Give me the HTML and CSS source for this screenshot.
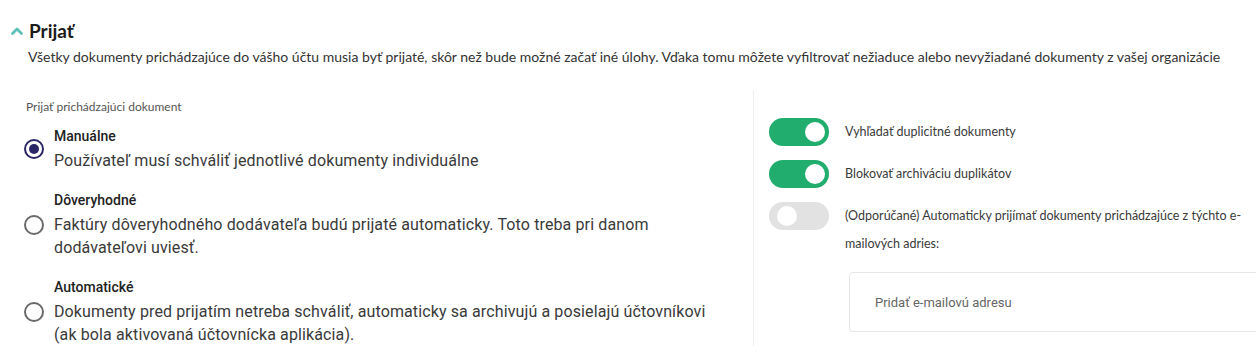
FILE: index.html
```html
<!DOCTYPE html>
<html lang="sk">
<head>
<meta charset="utf-8">
<link rel="stylesheet" href="styles.css">
</head>
<body>
<div class="page">
  <div class="head">
    <svg class="chev" width="12" height="8" viewBox="0 0 12 8"><path d="M1.5 6.5 L6 2 L10.5 6.5" fill="none" stroke="#5cc0b5" stroke-width="2.8" stroke-linecap="round" stroke-linejoin="round"/></svg>
    <h2 class="title">Prijať</h2>
  </div>
  <p class="desc">Všetky dokumenty prichádzajúce do vášho účtu musia byť prijaté, skôr než bude možné začať iné úlohy. Vďaka tomu môžete vyfiltrovať nežiaduce alebo nevyžiadané dokumenty z vašej organizácie</p>
  <div class="cols">
    <div class="left">
      <div class="label">Prijať prichádzajúci dokument</div>
      <div class="radio-item">
        <span class="radio checked"></span>
        <div class="rtext">
          <div class="rtitle">Manuálne</div>
          <div class="rdesc">Používateľ musí schváliť jednotlivé dokumenty individuálne</div>
        </div>
      </div>
      <div class="radio-item">
        <span class="radio"></span>
        <div class="rtext">
          <div class="rtitle">Dôveryhodné</div>
          <div class="rdesc">Faktúry dôveryhodného dodávateľa budú prijaté automaticky. Toto treba pri danom dodávateľovi uviesť.</div>
        </div>
      </div>
      <div class="radio-item">
        <span class="radio"></span>
        <div class="rtext">
          <div class="rtitle">Automatické</div>
          <div class="rdesc">Dokumenty pred prijatím netreba schváliť, automaticky sa archivujú a posielajú účtovníkovi (ak bola aktivovaná účtovnícka aplikácia).</div>
        </div>
      </div>
    </div>
    <div class="right">
      <div class="trow">
        <span class="toggle on"><span class="knob"></span></span>
        <span class="tlabel">Vyhľadať duplicitné dokumenty</span>
      </div>
      <div class="trow">
        <span class="toggle on"><span class="knob"></span></span>
        <span class="tlabel">Blokovať archiváciu duplikátov</span>
      </div>
      <div class="trow">
        <span class="toggle"><span class="knob"></span></span>
        <div class="tcol">
          <span class="tlabel">(Odporúčané) Automaticky prijímať dokumenty prichádzajúce z týchto e-mailových adries:</span>
          <div class="input">Pridať e-mailovú adresu</div>
        </div>
      </div>
    </div>
  </div>
</div>
</body>
</html>
```

FILE: styles.css
```css
html, body {
  margin: 0;
  padding: 0;
  background: #fff;
  overflow: hidden;
}
.page {
  width: 1256px;
  height: 358px;
  overflow: hidden;
  font-family: Lato, "Noto Sans", sans-serif;
}
.head {
  display: flex;
  align-items: center;
  gap: 6px;
  padding: 20px 0 0 11px;
  height: 22px;
}
.chev {
  display: block;
  margin-top: 0;
}
.title {
  margin: 0;
  font-family: Lato, sans-serif;
  font-weight: 700;
  font-size: 19px;
  line-height: 22px;
  color: #1c1c1c;
}
.desc {
  margin: 5px 0 0 28px;
  font-size: 14px;
  line-height: 20px;
  color: #333;
}
.cols {
  display: flex;
  margin-top: 23px;
}
.left {
  flex: none;
  width: 754px;
  box-sizing: border-box;
  border-right: 1px solid #eeeeee;
  padding: 10px 0 0 24px;
}
.label {
  font-size: 12px;
  line-height: 14px;
  color: #555;
  margin-left: 2px;
}
.radio-item {
  display: flex;
  align-items: center;
  gap: 10px;
  margin-top: 18px;
}
.label + .radio-item { margin-top: 12px; }
.radio {
  width: 20px;
  height: 20px;
  box-sizing: border-box;
  border: 2px solid #6a6a6a;
  border-radius: 50%;
  flex: none;
  position: relative;
}
.radio.checked {
  border-color: #2b2766;
}
.radio.checked::after {
  content: "";
  position: absolute;
  left: 3px;
  top: 3px;
  width: 10px;
  height: 10px;
  border-radius: 50%;
  background: #2b2766;
}
.rtext {
  width: 668px;
  font-family: Roboto, sans-serif;
}
.rtitle {
  font-size: 14px;
  font-weight: 500;
  line-height: 20px;
  color: #222;
}
.rdesc {
  margin-top: 3px;
  font-size: 16px;
  letter-spacing: 0.12px;
  line-height: 23px;
  color: #3a3a3a;
}
.right {
  padding: 28px 0 0 15px;
  flex: none;
  width: 520px;
}
.trow {
  display: flex;
  align-items: flex-start;
  gap: 16px;
  margin-bottom: 14px;
}
.toggle {
  flex: none;
  width: 60px;
  height: 28px;
  border-radius: 14px;
  background: #e2e2e2;
  position: relative;
}
.toggle.on {
  background: #21ad6d;
}
.knob {
  position: absolute;
  top: 4px;
  left: 8px;
  width: 20px;
  height: 20px;
  border-radius: 50%;
  background: #fff;
}
.toggle.on .knob {
  left: auto;
  right: 4px;
}
.tlabel {
  font-size: 12.5px;
  line-height: 28px;
  color: #3a3a3a;
}
.tcol {
  width: 420px;
  display: flex;
  flex-direction: column;
}
.tcol .tlabel {
  width: 410px;
}
.input {
  margin: 14px 0 0 4px;
  height: 60px;
  width: 430px;
  box-sizing: border-box;
  border: 1px solid #e6e6e6;
  border-radius: 4px;
  padding-left: 25px;
  display: flex;
  align-items: center;
  font-family: Roboto, sans-serif;
  font-size: 13px;
  color: #666;
}
```
